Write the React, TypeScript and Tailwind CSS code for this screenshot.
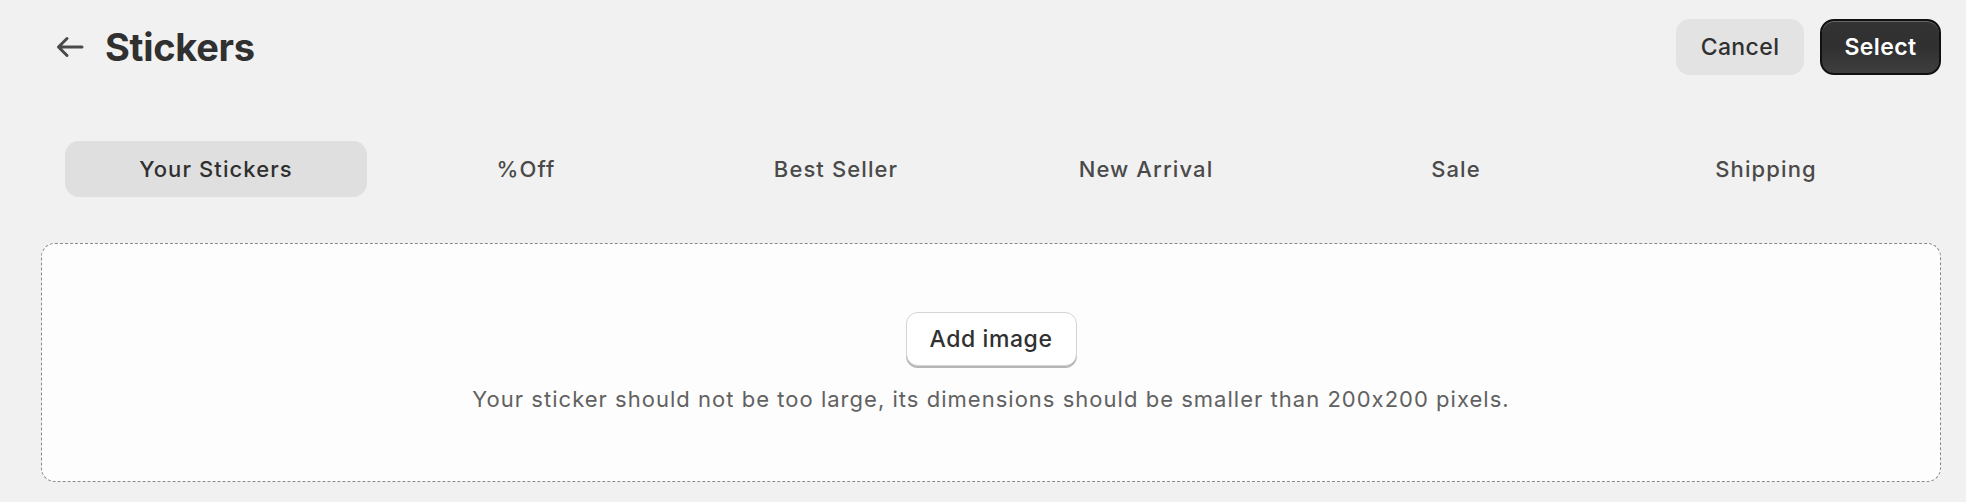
import { useState } from "react";

const tabs = ["Your Stickers", "%Off", "Best Seller", "New Arrival", "Sale", "Shipping"];

export default function App() {
  const [active, setActive] = useState(0);

  return (
    <div
      className="min-h-screen bg-[#f1f1f1] pl-[41px] pr-[25px] pt-[19px] text-[#303030]"
      style={{ fontFamily: "Inter, 'Noto Sans', sans-serif" }}
    >
      <div className="flex items-center justify-between h-[56px]">
        <div className="flex items-center">
          <button className="flex items-center justify-center w-[44px] h-[44px] ml-[7px] text-[#4a4a4a]">
            <svg width="28" height="22" viewBox="0 0 28 22" fill="none">
              <path
                d="M26 11H3M11 2.5L2.5 11L11 19.5"
                stroke="currentColor"
                strokeWidth="3"
                strokeLinecap="round"
                strokeLinejoin="round"
              />
            </svg>
          </button>
          <h1 className="ml-[13px] text-[38px] font-bold tracking-[-0.3px] leading-none">
            Stickers
          </h1>
        </div>
        <div className="flex items-center gap-[16px]">
          <button className="h-[56px] w-[128px] rounded-[14px] bg-[#e3e3e3] text-[23px] font-medium tracking-[0.4px] text-[#303030]">
            Cancel
          </button>
          <button className="h-[56px] w-[121px] rounded-[14px] border-2 border-[#111] bg-gradient-to-b from-[#333] via-[#303030] to-[#3f3f3f] text-[23px] font-semibold tracking-[0.4px] text-white shadow-[inset_0_1px_0_rgba(255,255,255,0.25)]">
            Select
          </button>
        </div>
      </div>

      <div className="mt-[66px] grid grid-cols-6 gap-[8px] px-[24px]">
        {tabs.map((t, i) => (
          <button
            key={t}
            onClick={() => setActive(i)}
            className={
              i === active
                ? "h-[56px] rounded-[14px] bg-[#dfdfdf] text-[22px] font-medium tracking-[1.1px] text-[#303030]"
                : "h-[56px] rounded-[14px] text-[22px] font-medium tracking-[1.1px] text-[#4a4a4a]"
            }
          >
            {t}
          </button>
        ))}
      </div>

      <div className="mt-[46px] h-[239px] rounded-[14px] border border-dashed border-[#8a8a8a] bg-[#fdfdfd] flex flex-col items-center pt-[68px]">
        <button className="h-[54px] w-[171px] rounded-[12px] border border-[#d4d4d4] bg-white text-[23px] font-medium tracking-[0.6px] text-[#303030] shadow-[0_2px_0_#b5b5b5]">
          Add image
        </button>
        <p className="mt-[17px] text-[22px] text-[#616161] tracking-[1.02px]">
          Your sticker should not be too large, its dimensions should be smaller than 200x200 pixels.
        </p>
      </div>
    </div>
  );
}
